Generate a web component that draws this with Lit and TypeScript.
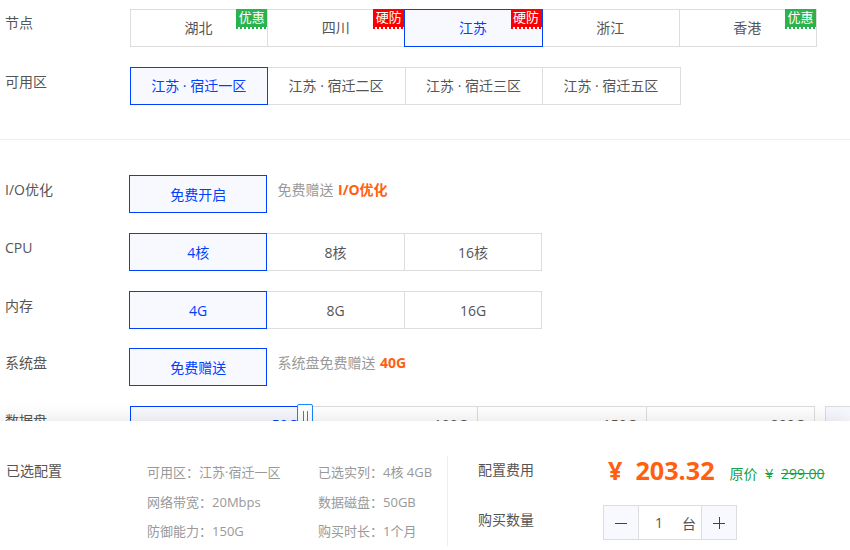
import { LitElement, html, css, nothing } from 'lit';
import { customElement } from 'lit/decorators.js';

type Tab = { text: string; active?: boolean; tag?: 'green' | 'red' };

const NODES: Tab[] = [
  { text: '湖北', tag: 'green' },
  { text: '四川', tag: 'red' },
  { text: '江苏', tag: 'red', active: true },
  { text: '浙江' },
  { text: '香港', tag: 'green' },
];

const ZONES: Tab[] = [
  { text: '江苏 · 宿迁一区', active: true },
  { text: '江苏 · 宿迁二区' },
  { text: '江苏 · 宿迁三区' },
  { text: '江苏 · 宿迁五区' },
];

const CPUS: Tab[] = [{ text: '4核', active: true }, { text: '8核' }, { text: '16核' }];
const MEMS: Tab[] = [{ text: '4G', active: true }, { text: '8G' }, { text: '16G' }];

const SUMMARY = [
  ['可用区：', '江苏·宿迁一区', '已选实列：', '4核 4GB'],
  ['网络带宽：', '20Mbps', '数据磁盘：', '50GB'],
  ['防御能力：', '150G', '购买时长：', '1个月'],
];

@customElement('app-root')
export class AppRoot extends LitElement {
  static styles = css`
    :host {
      display: block;
      font-family: 'Open Sans', 'Noto Sans CJK SC', sans-serif;
      font-size: 14px;
      color: #555;
    }

    .page {
      position: relative;
      width: 850px;
      height: 550px;
      overflow: hidden;
      background: #fff;
    }

    .top {
      padding-top: 9px;
    }

    .row {
      display: flex;
      margin-bottom: 20px;
    }

    .row.tight {
      margin-bottom: 19px;
    }

    .label {
      width: 125px;
      padding: 4px 0 0 5px;
      line-height: 20px;
      flex: none;
    }

    .label.zone {
      padding-top: 5px;
    }

    .group2 .label {
      width: 124px;
      padding-top: 5px;
    }

    .tabs {
      display: flex;
    }

    .tab {
      position: relative;
      box-sizing: border-box;
      width: 138.4px;
      height: 38px;
      margin-right: -1px;
      display: flex;
      align-items: center;
      justify-content: center;
      border: 1px solid #ddd;
    }

    .region .tab {
      padding: 0 1px 2px 0;
    }

    .nodes .tab {
      width: 138.2px;
    }

    .tab.active {
      z-index: 1;
      color: #0040ff;
      border-color: #0040ff;
      background: #f8f9ff;
    }

    .tag {
      position: absolute;
      top: -1px;
      right: 0;
      width: 31px;
      height: 18px;
      font-size: 13px;
      line-height: 17px;
      text-align: center;
      color: #fff;
      background: #2ab24f;
    }

    .tag::after {
      content: '';
      position: absolute;
      left: 0;
      right: 0;
      top: 18px;
      height: 2px;
      background: repeating-linear-gradient(90deg, #2ab24f 0 2px, transparent 2px 4px);
    }

    .tag.red {
      background: #fb0000;
    }

    .tag.red::after {
      background: repeating-linear-gradient(90deg, #fb0000 0 2px, transparent 2px 4px);
    }

    .divider {
      height: 1px;
      margin: 34px 0 35px;
      background: #eee;
    }

    .hint {
      margin-left: 11px;
      padding-top: 5px;
      line-height: 20px;
      color: #999;
    }

    .hint b {
      margin-left: 1px;
      color: #ff5f0f;
    }

    .slider {
      display: flex;
      position: relative;
      margin-left: 1px;
      height: 38px;
    }

    .seg {
      box-sizing: border-box;
      height: 38px;
      padding-top: 8px;
      line-height: 20px;
      text-align: right;
      border: 1px solid #ddd;
      border-left: none;
    }

    .seg.first {
      width: 168px;
      color: #0040ff;
      background: #f8f9ff;
      border: 1px solid #0040ff;
      border-right: none;
    }

    .seg.w1 { width: 165px; padding-right: 9px; margin-left: 15px; }
    .seg.w2 { width: 169px; padding-right: 9px; }
    .seg.w3 { width: 168px; padding-right: 9px; }

    .handle {
      position: absolute;
      left: 167px;
      top: -2px;
      box-sizing: border-box;
      width: 16px;
      height: 36px;
      display: flex;
      justify-content: center;
      gap: 3px;
      padding-top: 6px;
      background: #fff;
      border: 1px solid #1a86ff;
      border-radius: 2px;
    }

    .handle i {
      width: 1px;
      height: 14px;
      background: #1a86ff;
    }

    .size-input {
      position: absolute;
      left: 695px;
      top: 0;
      width: 40px;
      height: 38px;
      box-sizing: border-box;
      background: #f8f9ff;
      border: 1px solid #ddd;
    }

    .footer {
      position: absolute;
      left: 0;
      right: 0;
      top: 421px;
      height: 129px;
      display: flex;
      background: #fff;
      box-shadow: 0 0 20px rgba(0, 0, 0, 0.12);
    }

    .picked {
      width: 147px;
      box-sizing: border-box;
      padding: 40px 0 0 6px;
      line-height: 20px;
    }

    .summary {
      width: 301px;
      box-sizing: border-box;
      height: 90px;
      margin-top: 35px;
      padding-top: 6px;
      border-right: 1px solid #eee;
      font-size: 13px;
      color: #999;
    }

    .sum-row {
      display: grid;
      grid-template-columns: 171px 129px;
      height: 29.5px;
      line-height: 20px;
    }

    .cost {
      padding-left: 30px;
    }

    .cost-row {
      display: flex;
      align-items: flex-start;
      margin-top: 28px;
      height: 42px;
    }

    .cost-label {
      width: 125px;
      line-height: 42px;
      white-space: nowrap;
    }

    .yen,
    .price {
      font-size: 25.2px;
      font-weight: 700;
      color: #ff5f0f;
      line-height: 42px;
    }

    .yen {
      margin-left: 5px;
    }

    .price {
      margin-left: 13px;
    }

    .old {
      margin: 15px 0 0 15px;
      line-height: 20px;
      color: #14a04c;
    }

    .old s {
      margin-left: 4px;
    }

    .qty-row {
      display: flex;
      align-items: center;
      margin-top: 14px;
    }

    .qty-row .cost-label {
      line-height: 20px;
      margin-bottom: 5px;
    }

    .stepper {
      display: flex;
      box-sizing: border-box;
      width: 134px;
      height: 35px;
      border: 1px solid #ddd;
    }

    .step {
      width: 34px;
      flex: none;
      display: flex;
      align-items: center;
      justify-content: center;
      background: #f8f9ff;
    }

    .step svg {
      display: block;
    }

    .qty {
      flex: 1;
      display: flex;
      align-items: center;
      justify-content: space-between;
      padding: 0 5px 0 16px;
      border-left: 1px solid #ddd;
      border-right: 1px solid #ddd;
    }
  `;

  private renderTabs(tabs: Tab[], cls = '') {
    return html`
      <div class="tabs ${cls}">
        ${tabs.map(
          (t) => html`
            <div class="tab ${t.active ? 'active' : ''}">
              <span>${t.text}</span>
              ${t.tag
                ? html`<span class="tag ${t.tag}">${t.tag === 'green' ? '优惠' : '硬防'}</span>`
                : nothing}
            </div>
          `
        )}
      </div>
    `;
  }

  render() {
    return html`
      <div class="page">
        <div class="top">
          <div class="row">
            <div class="label">节点</div>
            ${this.renderTabs(NODES, 'region nodes')}
          </div>
          <div class="row">
            <div class="label zone">可用区</div>
            ${this.renderTabs(ZONES, 'region')}
          </div>
          <div class="divider"></div>
          <div class="group2">
            <div class="row">
              <div class="label">I/O优化</div>
              ${this.renderTabs([{ text: '免费开启', active: true }])}
              <div class="hint">免费赠送 <b>I/O优化</b></div>
            </div>
            <div class="row">
              <div class="label">CPU</div>
              ${this.renderTabs(CPUS)}
            </div>
            <div class="row tight">
              <div class="label">内存</div>
              ${this.renderTabs(MEMS)}
            </div>
            <div class="row">
              <div class="label">系统盘</div>
              ${this.renderTabs([{ text: '免费赠送', active: true }])}
              <div class="hint">系统盘免费赠送 <b>40G</b></div>
            </div>
            <div class="row">
              <div class="label">数据盘</div>
              <div class="slider">
                <div class="seg first">50G</div>
                <div class="handle"><i></i><i></i></div>
                <div class="seg w1">100G</div>
                <div class="seg w2">150G</div>
                <div class="seg w3">200G</div>
                <div class="size-input"></div>
              </div>
            </div>
          </div>
        </div>

        <div class="footer">
          <div class="picked">已选配置</div>
          <div class="summary">
            ${SUMMARY.map(
              (r) => html`
                <div class="sum-row">
                  <div>${r[0]}${r[1]}</div>
                  <div>${r[2]}${r[3]}</div>
                </div>
              `
            )}
          </div>
          <div class="cost">
            <div class="cost-row">
              <div class="cost-label">配置费用</div>
              <span class="yen">¥</span>
              <span class="price">203.32</span>
              <span class="old">原价 <s>¥</s> <s>299.00</s></span>
            </div>
            <div class="qty-row">
              <div class="cost-label">购买数量</div>
              <div class="stepper">
                <div class="step">
                  <svg width="12" height="12" viewBox="0 0 12 12"><path d="M0 6.5h12" stroke="#0f3fd6" fill="none" /></svg>
                </div>
                <div class="qty"><span>1</span><span>台</span></div>
                <div class="step">
                  <svg width="12" height="12" viewBox="0 0 12 12"><path d="M0 6.5h12M6.5 0v12" stroke="#0f3fd6" fill="none" /></svg>
                </div>
              </div>
            </div>
          </div>
        </div>
      </div>
    `;
  }
}
